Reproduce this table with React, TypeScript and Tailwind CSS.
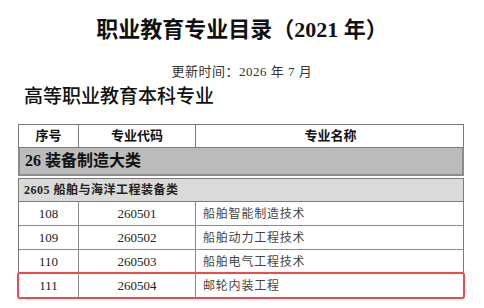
const serif = "font-['Liberation_Serif','Noto_Sans_CJK_SC',serif]";

const rows = [
  { no: '108', code: '260501', name: '船舶智能制造技术' },
  { no: '109', code: '260502', name: '船舶动力工程技术' },
  { no: '110', code: '260503', name: '船舶电气工程技术' },
];

const cols = 'grid grid-cols-[60px_117px_269px]';

const DataRow = ({ no, code, name }: { no: string; code: string; name: string }) => (
  <div className={`${cols} h-[24px] border-b border-[#8a8a8a] text-[13px] text-[#222]`}>
    <div className="flex items-center justify-center border-r border-[#8a8a8a]">{no}</div>
    <div className="flex items-center justify-center border-r border-[#8a8a8a]">{code}</div>
    <div className="flex items-center pl-[7px] text-[12px] tracking-[0.8px] text-[#444]">{name}</div>
  </div>
);

const App = () => {
  return (
    <div className={`w-[484px] h-[308px] bg-white overflow-hidden flex flex-col ${serif}`}>
      <h1 className="mt-[16px] h-[28px] leading-[28px] text-center text-[22px] font-bold text-[#111]">
        职业教育专业目录（2021 年）
      </h1>
      <p className="mt-[19px] h-[18px] leading-[18px] text-center text-[13px] tracking-[0.5px] text-[#333]">
        更新时间：2026 年 7 月
      </p>
      <h2 className="mt-[4px] ml-[24px] h-[24px] leading-[24px] text-[19px] font-medium text-[#111]">
        高等职业教育本科专业
      </h2>

      <div className="mt-[15px] ml-[18px] w-[446px] flex flex-col">
        <div className={`${cols} h-[24px] border border-[#7a7a7a] text-[13px] font-bold text-[#111]`}>
          <div className="flex items-center justify-center border-r border-[#7a7a7a]">序号</div>
          <div className="flex items-center justify-center border-r border-[#7a7a7a]">专业代码</div>
          <div className="flex items-center justify-center">专业名称</div>
        </div>

        <div className="h-[28px] flex items-center pl-[5px] bg-[#bcbcbc] border-2 border-t-0 border-[#8c8c8c] text-[16px] font-bold text-[#111]">
          26 装备制造大类
        </div>

        <div className="mt-[2px] border-x border-[#7a7a7a]">
          <div className="h-[24px] flex items-center pl-[5px] bg-[#dadada] border-y border-[#7a7a7a] text-[12px] font-semibold tracking-[0.5px] text-[#222]">
            2605 船舶与海洋工程装备类
          </div>
          {rows.map((r) => (
            <DataRow key={r.no} {...r} />
          ))}
          <div className="relative">
            <DataRow no="111" code="260504" name="邮轮内装工程" />
            <span className="absolute -left-[2px] -right-[2px] -top-[2px] -bottom-[1px] border-2 border-[#f24848] rounded-[3px]" />
          </div>
        </div>
      </div>
    </div>
  );
};

export default App;
